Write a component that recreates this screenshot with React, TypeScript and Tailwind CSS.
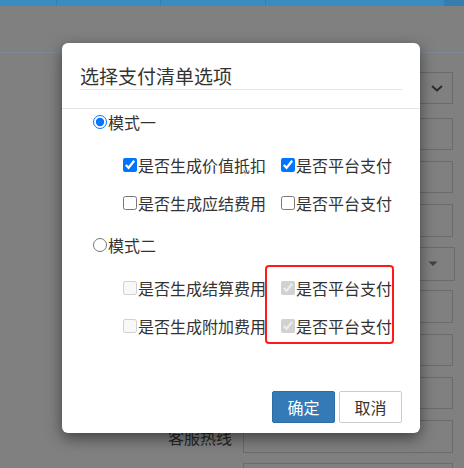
import React from "react";

const FONT = { fontFamily: '"Microsoft YaHei", "Noto Sans CJK SC", "Noto Sans", sans-serif' };

function BgRow({
  mt,
  h,
  w,
  label,
  kind,
}: {
  mt: string;
  h: string;
  w: string;
  label?: string;
  kind?: "chevron" | "caret";
}) {
  return (
    <div className={`flex items-center ${mt}`}>
      <div className="w-[243px] pr-[11px] text-right text-[16px] text-[#262626]">{label ?? ""}</div>
      <div className={`${w} ${h} border border-[#6b6b6b] flex items-center justify-end`}>
        {kind === "chevron" && (
          <svg width="14" height="10" viewBox="0 0 14 10" className="mr-[8px]">
            <path d="M2 3 L7 7.5 L12 3" fill="none" stroke="#2b2b2b" strokeWidth="2" />
          </svg>
        )}
        {kind === "caret" && (
          <svg width="10" height="6" viewBox="0 0 10 6" className="mr-[16px]">
            <path d="M0.5 0.5 L9.5 0.5 L5 5 Z" fill="#404040" />
          </svg>
        )}
      </div>
    </div>
  );
}

function Check({
  label,
  checked,
  disabled,
}: {
  label: string;
  checked?: boolean;
  disabled?: boolean;
}) {
  return (
    <label className="flex items-center h-[22px]">
      <input
        type="checkbox"
        defaultChecked={checked}
        disabled={disabled}
        className="m-0 w-[14px] h-[14px] mr-[1px]"
      />
      <span className="whitespace-nowrap">{label}</span>
    </label>
  );
}

function Radio({ label, checked }: { label: string; checked?: boolean }) {
  return (
    <label className="flex items-center h-[22px]">
      <input
        type="radio"
        name="mode"
        defaultChecked={checked}
        className="m-0 w-[14px] h-[14px] mr-[1px]"
      />
      <span>{label}</span>
    </label>
  );
}

export default function App() {
  return (
    <div className="relative w-[464px] h-[468px] overflow-hidden bg-[#808080]" style={FONT}>
      {/* top header bar */}
      <div className="flex h-[6px]">
        <div className="w-[57px] bg-[#3a8bbf] border-r border-[#3580b2]" />
        <div className="w-[104px] bg-[#3a8bbf] border-r border-[#3580b2]" />
        <div className="w-[105px] bg-[#3a8bbf] border-r border-[#3580b2]" />
        <div className="w-[178px] bg-[#3a8bbf]" />
        <div className="flex-1 bg-[#357daf]" />
      </div>
      <div className="h-[46px]" />
      <div className="h-px bg-[#7b8896]" />

      {/* background form (under overlay) */}
      <div className="pt-[19px] flex flex-col">
        <BgRow mt="mt-0" h="h-[32px]" w="w-[210px]" kind="chevron" />
        <BgRow mt="mt-[14px]" h="h-[32px]" w="w-[210px]" />
        <BgRow mt="mt-[11px]" h="h-[32px]" w="w-[210px]" />
        <BgRow mt="mt-[11px]" h="h-[33px]" w="w-[210px]" />
        <BgRow mt="mt-[10px]" h="h-[34px]" w="w-[212px]" kind="caret" />
        <BgRow mt="mt-[9px]" h="h-[33px]" w="w-[210px]" />
        <BgRow mt="mt-[11px]" h="h-[32px]" w="w-[210px]" />
        <BgRow mt="mt-[11px]" h="h-[32px]" w="w-[210px]" />
        <BgRow mt="mt-[11px]" h="h-[33px]" w="w-[210px]" label="客服热线" />
        <BgRow mt="mt-[10px]" h="h-[33px]" w="w-[210px]" />
      </div>

      {/* modal */}
      <div className="absolute left-[62px] top-[43px] w-[358px] h-[390px] bg-white rounded-[6px] shadow-[0_5px_15px_rgba(0,0,0,0.5)] flex flex-col text-[#333]">
        <div className="px-[18px] pt-[19px] pb-[18px] border-b border-[#e5e5e5]">
          <div className="text-[19px] leading-[27px] border-b border-[#e5e5e5] text-[#333]">
            选择支付清单选项
          </div>
        </div>
        <div className="flex-1 pl-[31px] pt-[2px] text-[16px] leading-[22px]">
          <Radio label="模式一" checked />
          <div className="pl-[30px]">
            <div className="mt-[21px] grid grid-cols-[158px_auto]">
              <Check label="是否生成价值抵扣" checked />
              <Check label="是否平台支付" checked />
            </div>
            <div className="mt-[16px] grid grid-cols-[158px_auto]">
              <Check label="是否生成应结费用" />
              <Check label="是否平台支付" />
            </div>
          </div>
          <div className="mt-[20px]">
            <Radio label="模式二" />
          </div>
          <div className="pl-[30px]">
            <div className="mt-[21px] grid grid-cols-[158px_auto]">
              <Check label="是否生成结算费用" disabled />
              <Check label="是否平台支付" checked disabled />
            </div>
            <div className="mt-[16px] grid grid-cols-[158px_auto]">
              <Check label="是否生成附加费用" disabled />
              <Check label="是否平台支付" checked disabled />
            </div>
          </div>
        </div>
        <div className="flex justify-end gap-[4px] pr-[18px] pb-[10px]">
          <button className="w-[63px] h-[32px] bg-[#337ab7] border border-[#2e6da4] text-white text-[16px] rounded-[2px]">
            确定
          </button>
          <button className="w-[63px] h-[32px] bg-white border border-[#ccc] text-[#333] text-[16px] rounded-[2px]">
            取消
          </button>
        </div>
      </div>

      {/* red annotation box */}
      <div className="absolute left-[265px] top-[265px] w-[129px] h-[79px] border-2 border-[#ff1a1a] rounded-[4px]" />
    </div>
  );
}
